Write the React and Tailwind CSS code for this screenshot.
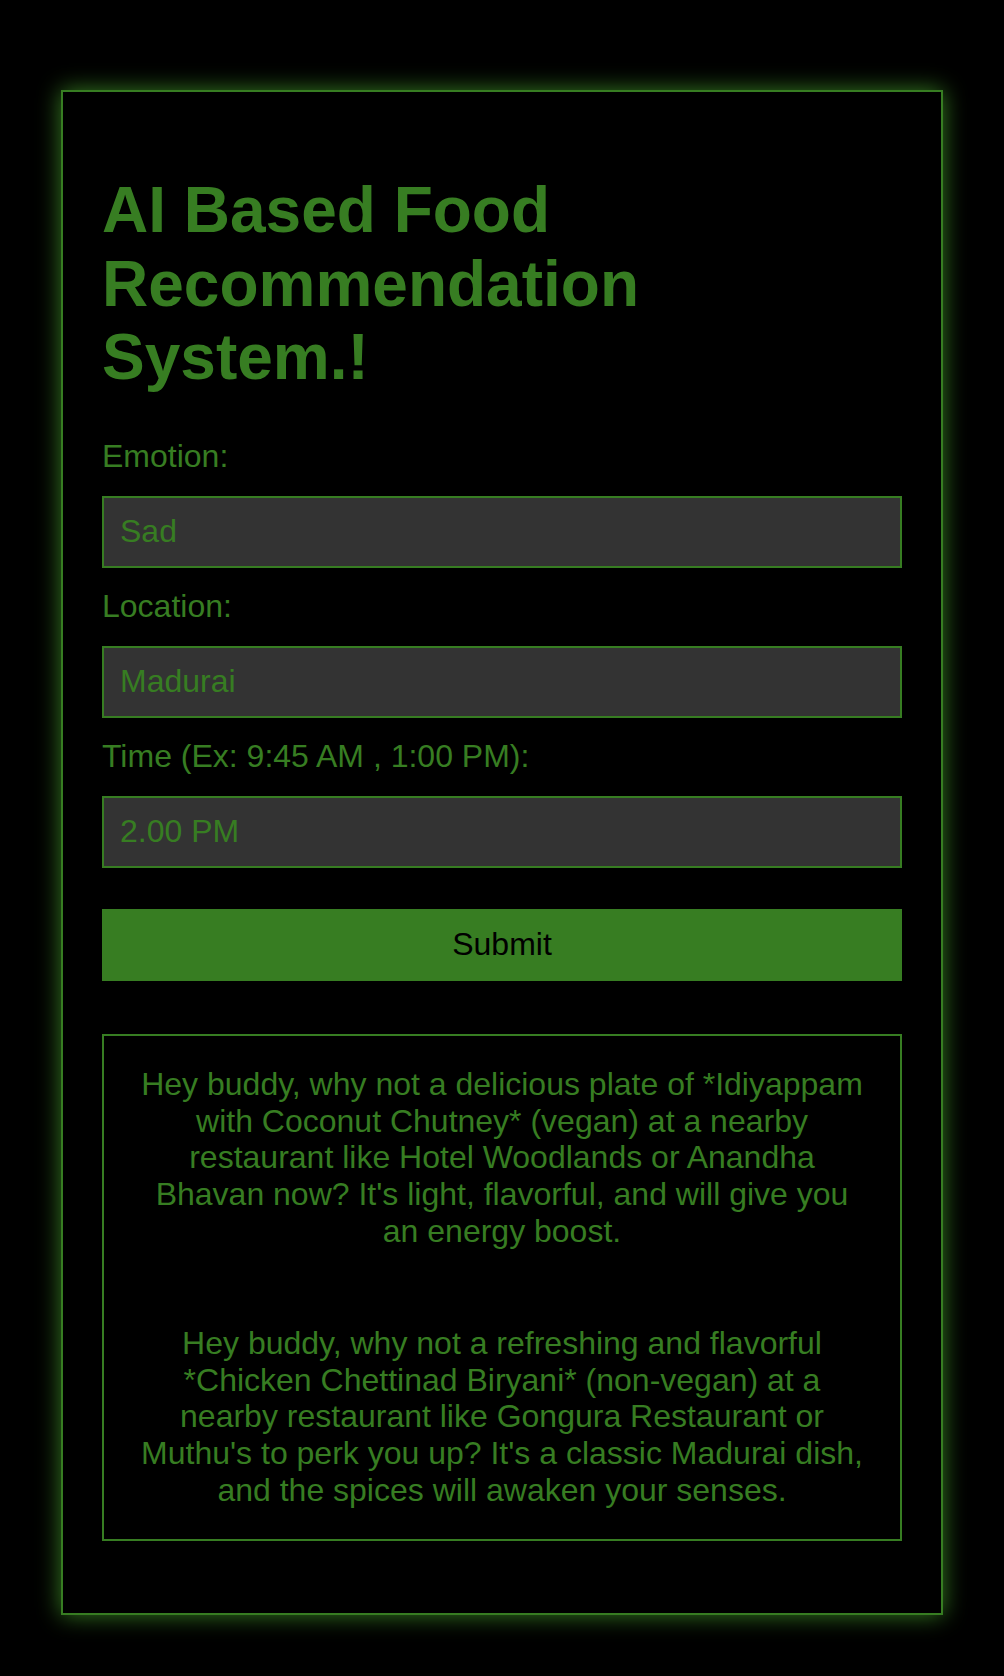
export default function App() {
  const fields = [
    { label: 'Emotion:', value: 'Sad' },
    { label: 'Location:', value: 'Madurai' },
    { label: 'Time (Ex: 9:45 AM , 1:00 PM):', value: '2.00 PM' },
  ];

  return (
    <div className="min-h-[1676px] bg-black pt-[90px] pb-[62px] font-['Liberation_Sans',Arial,sans-serif] text-[32px] leading-[1.15] text-[#377d22]">
      <div className="mx-auto w-[882px] border-2 border-[#377d22] px-[39px] pt-[40px] pb-[72px] shadow-[0_0_22px_#377d22]">
        <h1 className="mt-[42px] mb-[43px] text-[64px] font-bold leading-[1.15]">
          AI Based Food Recommendation System.!
        </h1>

        {fields.map((f, i) => (
          <div key={f.label} className={i < fields.length - 1 ? 'pb-[20px]' : ''}>
            <label className="block h-[37px] mb-[21px]">{f.label}</label>
            <input
              type="text"
              defaultValue={f.value}
              className="block w-full h-[72px] border-2 border-[#377d22] bg-[#333333] px-[16px] text-[32px] text-[#377d22] outline-none"
            />
          </div>
        ))}

        <button className="block w-full h-[72px] mt-[41px] bg-[#377d22] text-[32px] text-black">
          Submit
        </button>

        <div className="mt-[53px] border-2 border-[#377d22] px-[30px] py-[30px] text-center">
          <p>
            Hey buddy, why not a delicious plate of *Idiyappam with Coconut Chutney* (vegan) at a nearby
            restaurant like Hotel Woodlands or Anandha Bhavan now? It's light, flavorful, and will give you
            an energy boost.
          </p>
          <p className="mt-[75px]">
            Hey buddy, why not a refreshing and flavorful *Chicken Chettinad Biryani* (non-vegan) at a nearby
            restaurant like Gongura Restaurant or Muthu's to perk you up? It's a classic Madurai dish, and the
            spices will awaken your senses.
          </p>
        </div>
      </div>
    </div>
  );
}
